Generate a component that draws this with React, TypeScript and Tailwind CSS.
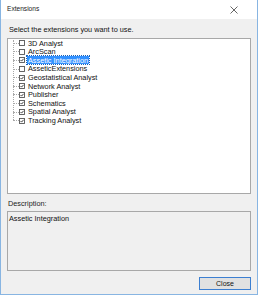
import React from "react";

const items: { name: string; checked: boolean; selected?: boolean }[] = [
  { name: "3D Analyst", checked: false },
  { name: "ArcScan", checked: false },
  { name: "Assetic Integration", checked: true, selected: true },
  { name: "AsseticExtensions", checked: false },
  { name: "Geostatistical Analyst", checked: true },
  { name: "Network Analyst", checked: true },
  { name: "Publisher", checked: true },
  { name: "Schematics", checked: true },
  { name: "Spatial Analyst", checked: true },
  { name: "Tracking Analyst", checked: true },
];

function Box({ checked }: { checked: boolean }) {
  return (
    <svg width="6" height="6" viewBox="0 0 6 6" className="shrink-0">
      <rect x="0.5" y="0.5" width="5" height="5" fill="#fff" stroke="#555" strokeWidth="0.9" />
      {checked && <path d="M1.5 3 L2.6 4.1 L4.6 1.8" fill="none" stroke="#333" strokeWidth="0.9" />}
    </svg>
  );
}

export default function App() {
  return (
    <div
      className="w-[258px] h-[295px] flex flex-col bg-[#f0f0f0] border-l border-r border-b border-[#88b5e2] overflow-hidden leading-none"
      style={{ fontFamily: '"Liberation Sans", Arial, sans-serif' }}
    >
      <div className="h-[19px] shrink-0 bg-white flex items-center justify-between pl-[6px] pr-[19px]">
        <span className="text-[6.6px] text-[#222]">Extensions</span>
        <svg width="8" height="8" viewBox="0 0 8 8">
          <path d="M0.5 0.5 L7.5 7.5 M7.5 0.5 L0.5 7.5" stroke="#555" strokeWidth="0.9" />
        </svg>
      </div>
      <div className="flex-1 flex flex-col px-[6px]">
        <div className="h-[19px] flex items-center pl-[2px] pt-[2px] text-[7.3px] text-[#111]">
          Select the extensions you want to use.
        </div>
        <div className="h-[156px] bg-white border border-[#a8a8a8] relative">
          <div className="absolute left-[5px] top-[1px] h-[80px] border-l border-dotted border-[#a8a8a8]" />
          <div className="flex flex-col">
            {items.map((it) => (
              <div key={it.name} className="h-[8.6px] flex items-center relative">
                <div className="w-[6px] ml-[5px] border-t border-dotted border-[#a8a8a8]" />
                <Box checked={it.checked} />
                <span
                  className={
                    it.selected
                      ? "ml-[2px] px-[1px] h-[8px] flex items-center bg-[#3391ff] text-white text-[7.3px] outline outline-1 outline-dotted outline-[#1a5fb4]"
                      : "ml-[2px] px-[1px] text-[7.3px] text-[#111]"
                  }
                >
                  {it.name}
                </span>
              </div>
            ))}
          </div>
        </div>
        <div className="h-[17px] flex items-center pl-[1px] pt-[2px] text-[7.3px] text-[#222]">Description:</div>
        <div className="h-[60px] border border-[#a8a8a8] bg-[#f0f0f0] px-[1px] pt-[2px] text-[7.3px] leading-[9px] text-[#111]">
          Assetic Integration
        </div>
        <div className="flex justify-end pt-[6px]">
          <div className="w-[52px] h-[13px] border border-[#3c7fd1] bg-[#e1e1e1] flex items-center justify-center text-[7px] text-[#111]">
            Close
          </div>
        </div>
      </div>
    </div>
  );
}
